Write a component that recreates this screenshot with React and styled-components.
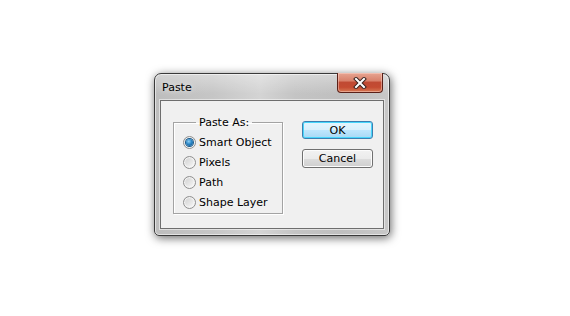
import React from "react";
import styled, { createGlobalStyle } from "styled-components";

const GlobalStyle = createGlobalStyle`
    html, body {
        margin: 0;
        padding: 0;
        background: #fff;
    }
    body {
        font-family: "DejaVu Sans", Tahoma, sans-serif;
        font-size: 11px;
        color: #000;
    }
`;

const Page = styled.div`
    width: 570px;
    height: 316px;
    padding: 73px 0 0 154px;
    box-sizing: border-box;
`;

const Frame = styled.div`
    width: 236px;
    height: 163px;
    box-sizing: border-box;
    border: 1px solid #3a3a3a;
    border-radius: 7px 7px 5px 5px;
    padding: 0 5px 6px 5px;
    display: flex;
    flex-direction: column;
    background:
        linear-gradient(180deg, rgba(255,255,255,0.35) 0px, rgba(255,255,255,0) 20px),
        linear-gradient(90deg, #bdbdbd 0%, #c6c6c6 25%, #d4d4d4 45%, #c4c4c4 60%, #bfbfbf 80%, #c8c8c8 100%);
    box-shadow:
        inset 0 0 0 1px rgba(255,255,255,0.55),
        1px 2px 10px rgba(0,0,0,0.6);
`;

const TitleBar = styled.div`
    height: 26px;
    display: flex;
    align-items: flex-start;
    justify-content: space-between;
`;

const Title = styled.span`
    margin-top: 7px;
    margin-left: 2px;
    font-size: 11px;
    line-height: 13px;
    color: #000;
    text-shadow: 0 0 6px rgba(255,255,255,0.9);
`;

const CloseButton = styled.button`
    width: 46px;
    height: 20px;
    margin: -1px 1px 0 0;
    padding: 0;
    box-sizing: border-box;
    border: 1px solid #5a2018;
    border-top: none;
    border-radius: 0 0 4px 4px;
    background: linear-gradient(180deg, #e7a592 0%, #d9826c 40%, #c04a33 50%, #c44b31 75%, #d77a55 100%);
    box-shadow: inset 0 0 0 1px rgba(255,220,210,0.45);
    display: flex;
    align-items: center;
    justify-content: center;
`;

const Client = styled.div`
    flex: 1;
    border: 1px solid #6e6e6e;
    background: #f0f0f0;
    box-shadow: 0 0 0 1px rgba(255,255,255,0.5);
    display: flex;
    align-items: flex-start;
    padding: 15px 0 0 12px;
`;

const GroupBox = styled.fieldset`
    margin: 0;
    padding: 0 0 1px 9px;
    width: 110px;
    height: 98px;
    box-sizing: border-box;
    border: 1px solid #a3a3a3;
    box-shadow: inset 1px 1px 0 #fff, 1px 1px 0 #fff;
    min-width: 0;
`;

const Legend = styled.legend`
    margin-left: 13px;
    padding: 0 3px;
    font-size: 11px;
    line-height: 13px;
`;

const RadioList = styled.div`
    display: flex;
    flex-direction: column;
    padding-top: 3px;
`;

const RadioRow = styled.label`
    height: 20px;
    display: flex;
    align-items: center;
    gap: 3px;
    line-height: 13px;
    white-space: nowrap;
`;

const RadioDot = styled.span`
    position: relative;
    width: 13px;
    height: 13px;
    box-sizing: border-box;
    border-radius: 50%;
    border: 1px solid #8f8f8f;
    background: linear-gradient(135deg, #cfcfcf 0%, #eaeaea 55%, #ffffff 100%);
    box-shadow: inset 0 0 0 1px #f4f4f4;
    flex-shrink: 0;

    &::after {
        content: "";
        position: absolute;
        left: 2px;
        top: 2px;
        width: 7px;
        height: 7px;
        border-radius: 50%;
        background: ${({ $checked }) => $checked
            ? "radial-gradient(circle at 40% 35%, #8fd0f5 0%, #2a86c6 45%, #0b4f86 100%)"
            : "linear-gradient(135deg, #d6d6d6, #f2f2f2)"};
        box-shadow: ${({ $checked }) => $checked ? "0 0 0 1px #1b5b8c" : "none"};
    }
`;

const Buttons = styled.div`
    display: flex;
    flex-direction: column;
    gap: 10px;
    margin: 5px 0 0 19px;
`;

const Button = styled.button`
    width: 71px;
    height: ${({ $primary }) => $primary ? "18px" : "19px"};
    padding: 0;
    box-sizing: border-box;
    border-radius: 3px;
    font-family: "DejaVu Sans", Tahoma, sans-serif;
    font-size: 11px;
    line-height: 13px;
    color: #000;
    border: 1px solid ${({ $primary }) => $primary ? "#3c7fb1" : "#707070"};
    background: ${({ $primary }) => $primary
        ? "linear-gradient(180deg, #e6f5fd 0%, #d9f0fc 50%, #bee6fd 51%, #a7d9f5 100%)"
        : "linear-gradient(180deg, #f2f2f2 0%, #ebebeb 50%, #dddddd 51%, #cfcfcf 100%)"};
    box-shadow: inset 0 0 0 1px ${({ $primary }) => $primary ? "#48d6fb" : "#fcfcfc"};
`;

const options = ["Smart Object", "Pixels", "Path", "Shape Layer"];

const App = () => {
    return (
        <>
            <GlobalStyle />
            <Page>
                <Frame>
                    <TitleBar>
                        <Title>Paste</Title>
                        <CloseButton aria-label="Close">
                            <svg width="14" height="12" viewBox="0 0 14 12">
                                <path d="M3 2 L11 10 M11 2 L3 10" stroke="#3b2420" strokeWidth="4" strokeLinecap="square" />
                                <path d="M3 2 L11 10 M11 2 L3 10" stroke="#fff" strokeWidth="2" strokeLinecap="square" />
                            </svg>
                        </CloseButton>
                    </TitleBar>
                    <Client>
                        <GroupBox>
                            <Legend>Paste As:</Legend>
                            <RadioList>
                                {options.map((o, i) => (
                                    <RadioRow key={o}>
                                        <RadioDot $checked={i === 0} />
                                        {o}
                                    </RadioRow>
                                ))}
                            </RadioList>
                        </GroupBox>
                        <Buttons>
                            <Button $primary>OK</Button>
                            <Button>Cancel</Button>
                        </Buttons>
                    </Client>
                </Frame>
            </Page>
        </>
    );
};

export default App;
